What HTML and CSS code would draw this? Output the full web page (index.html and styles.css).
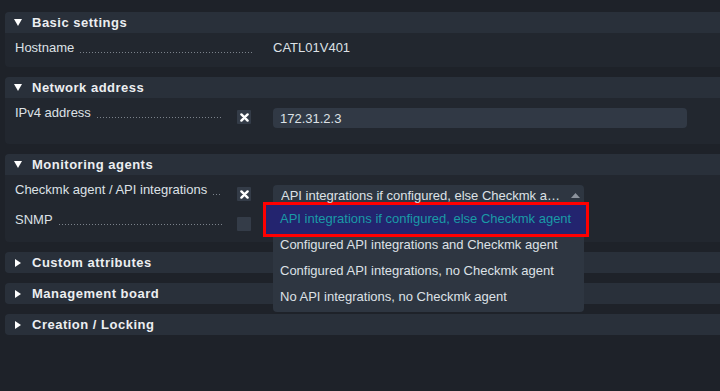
FILE: index.html
```html
<!DOCTYPE html>
<html lang="en">
<head>
    <meta charset="UTF-8">
    <meta name="viewport" content="width=device-width, initial-scale=1.0">
    <title>Host properties</title>
    <link rel="stylesheet" href="styles.css">
</head>
<body>
    <div class="page">
        <div class="section">
            <div class="header">
                <span class="arrow"><svg width="8" height="7" viewBox="0 0 8 7"><polygon points="0,0 8,0 4,7" fill="#fff"/></svg></span>
                Basic settings
            </div>
            <div class="body">
                <div class="row">
                    <div class="label"><span class="text">Hostname</span><span class="dots"></span></div>
                    <div class="value">CATL01V401</div>
                </div>
            </div>
        </div>

        <div class="section">
            <div class="header">
                <span class="arrow"><svg width="8" height="7" viewBox="0 0 8 7"><polygon points="0,0 8,0 4,7" fill="#fff"/></svg></span>
                Network address
            </div>
            <div class="body">
                <div class="row row-input">
                    <div class="label has-toggle">
                        <span class="text">IPv4 address</span><span class="dots"></span>
                        <span class="toggle"><svg width="9" height="9" viewBox="0 0 9 9"><path d="M1.4 1.4 L7.6 7.6 M7.6 1.4 L1.4 7.6" stroke="#fff" stroke-width="2.4" stroke-linecap="round"/></svg></span>
                    </div>
                    <div class="value input">172.31.2.3</div>
                </div>
            </div>
        </div>

        <div class="section">
            <div class="header">
                <span class="arrow"><svg width="8" height="7" viewBox="0 0 8 7"><polygon points="0,0 8,0 4,7" fill="#fff"/></svg></span>
                Monitoring agents
            </div>
            <div class="body">
                <div class="row">
                    <div class="label has-toggle">
                        <span class="text">Checkmk agent / API integrations</span><span class="dots"></span>
                        <span class="toggle"><svg width="9" height="9" viewBox="0 0 9 9"><path d="M1.4 1.4 L7.6 7.6 M7.6 1.4 L1.4 7.6" stroke="#fff" stroke-width="2.4" stroke-linecap="round"/></svg></span>
                    </div>
                    <div class="value dropdown">
                        <div class="dropdown-panel">
                            <div class="dropdown-current">
                                <span class="current-text">API integrations if configured, else Checkmk a…</span>
                                <svg class="caret" width="9" height="5" viewBox="0 0 9 5"><polygon points="0,5 9,5 4.5,0" fill="#8c939c"/></svg>
                            </div>
                            <div class="option selected">API integrations if configured, else Checkmk agent</div>
                            <div class="option">Configured API integrations and Checkmk agent</div>
                            <div class="option">Configured API integrations, no Checkmk agent</div>
                            <div class="option">No API integrations, no Checkmk agent</div>
                        </div>
                    </div>
                </div>
                <div class="row">
                    <div class="label has-toggle">
                        <span class="text">SNMP</span><span class="dots"></span>
                        <span class="toggle"></span>
                    </div>
                </div>
            </div>
        </div>

        <div class="section closed">
            <div class="header">
                <span class="arrow"><svg width="8" height="8" viewBox="0 0 8 8"><polygon points="1,0 7,4 1,8" fill="#fff"/></svg></span>
                Custom attributes
            </div>
        </div>

        <div class="section closed">
            <div class="header">
                <span class="arrow"><svg width="8" height="8" viewBox="0 0 8 8"><polygon points="1,0 7,4 1,8" fill="#fff"/></svg></span>
                Management board
            </div>
        </div>

        <div class="section closed">
            <div class="header">
                <span class="arrow"><svg width="8" height="8" viewBox="0 0 8 8"><polygon points="1,0 7,4 1,8" fill="#fff"/></svg></span>
                Creation / Locking
            </div>
        </div>
    </div>
</body>
</html>
```

FILE: styles.css
```css
body, html {
    margin: 0;
    padding: 0;
    background: #1e2229;
    overflow: hidden;
}
body {
    font-family: "Liberation Sans", Arial, sans-serif;
    font-size: 13px;
    line-height: 16px;
    color: #dde1e6;
}
.page {
    padding: 12px 0 0 5px;
}
.section {
    margin: 0 -8px 10px 0;
    background: #22272f;
    border-radius: 4px;
}
.header {
    height: 21px;
    display: flex;
    align-items: center;
    padding-left: 9px;
    background: #29303a;
    border-radius: 4px 4px 0 0;
    font-weight: bold;
    letter-spacing: 0.5px;
    color: #eceef1;
}
.section.closed .header {
    border-radius: 4px;
}
.arrow {
    width: 10px;
    margin-right: 8px;
    display: flex;
}
.body {
    padding: 0 0 11px 10px;
}
.row {
    display: flex;
    align-items: flex-start;
    padding-top: 7px;
}
.row-input {
    padding-bottom: 5px;
}
.label {
    width: 240px;
    display: flex;
    flex-shrink: 0;
}
.label .text {
    white-space: nowrap;
}
.dots {
    flex: 1;
    min-width: 0;
    height: 16px;
    margin: 0 2px 0 6px;
    background: linear-gradient(90deg, #7b828b 1px, transparent 1px) 0 12px / 3px 1px repeat-x;
}
.has-toggle .dots {
    margin-right: 15px;
}
.toggle {
    width: 14px;
    height: 14px;
    margin: 5px 4px 0 0;
    flex-shrink: 0;
    background: #343c48;
    border-radius: 1px;
    display: flex;
    align-items: center;
    justify-content: center;
}
.value {
    margin-left: 18px;
}
.input {
    margin-top: 3px;
    width: 414px;
    height: 20px;
    box-sizing: border-box;
    padding-left: 7px;
    line-height: 21px;
    background: #313945;
    border-radius: 4px;
}
.dropdown {
    position: relative;
    margin-top: 3px;
    width: 311px;
    height: 20px;
}
.dropdown-panel {
    position: absolute;
    top: 0;
    left: 0;
    right: 0;
    z-index: 1;
    background: #2e3641;
    border-radius: 4px;
    padding-bottom: 3px;
}
.dropdown-current {
    height: 20px;
    display: flex;
    align-items: center;
    padding: 1px 4px 0 8px;
    box-sizing: border-box;
}
.current-text {
    flex: 1;
    white-space: nowrap;
    overflow: hidden;
}
.caret {
    margin: -1px 0 0 8px;
}
.option {
    height: 26px;
    line-height: 28px;
    padding-left: 7px;
    white-space: nowrap;
}
.option.selected {
    box-sizing: border-box;
    height: 35px;
    line-height: 16px;
    margin: -3px -5px -6px -10px;
    padding: 6px 0 7px 14px;
    border: 3px solid #ff0000;
    background: #23246f;
    color: #1a9aa6;
}
```
